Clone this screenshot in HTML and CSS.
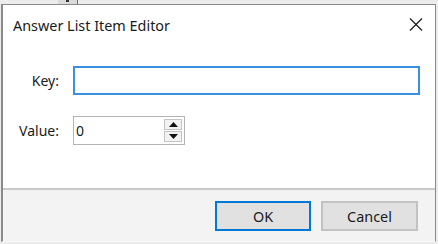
FILE: index.html
```html
<!DOCTYPE html>
<html>
<head>
<meta charset="utf-8">
<link rel="stylesheet" href="styles.css">
</head>
<body>
<div class="bg-strip"><span class="bg-btn"><span class="bg-mark"></span></span></div>
<div class="window">
  <div class="titlebar">
    <span class="title">Answer List Item Editor</span>
    <svg class="close" width="14" height="13" viewBox="0 0 14 13"><path d="M1 0.5 L13 12.5 M13 0.5 L1 12.5" stroke="#1a1a1a" stroke-width="1.2" fill="none"/></svg>
  </div>
  <div class="form">
    <label class="lbl">Key:</label>
    <div class="input key"></div>
    <label class="lbl">Value:</label>
    <div class="input spin">
      <span class="val">0</span>
      <div class="spinbtns">
        <div class="sb"><svg width="9" height="5" viewBox="0 0 9 5"><path d="M4.5 0 L9 5 L0 5 Z" fill="#111"/></svg></div>
        <div class="sb"><svg width="9" height="5" viewBox="0 0 9 5"><path d="M0 0 L9 0 L4.5 5 Z" fill="#111"/></svg></div>
      </div>
    </div>
  </div>
  <div class="footer">
    <button class="btn ok">OK</button>
    <button class="btn">Cancel</button>
  </div>
</div>
</body>
</html>
```
FILE: styles.css
```css
html, body {
  margin: 0;
  padding: 0;
}
body {
  width: 438px;
  height: 244px;
  box-sizing: border-box;
  padding-left: 1px;
  background: #ececec;
  font-family: "Noto Sans", "Open Sans", sans-serif;
  font-size: 14px;
  color: #1a1a1a;
  overflow: hidden;
}
.bg-strip {
  height: 4px;
  display: flex;
}
.bg-btn {
  margin-left: 57px;
  width: 19px;
  height: 4px;
  background: #dadada;
  border-right: 1px solid #6d6d6d;
  display: flex;
  justify-content: center;
}
.bg-mark {
  width: 3px;
  height: 2px;
  background: #333;
}
.window {
  width: 435px;
  height: 238px;
  box-sizing: border-box;
  background: #fff;
  border: 1px solid #8a8a8a;
  border-left: 2px solid #8a8a8a;
  border-bottom: 1px solid #f8f8f8;
  display: flex;
  flex-direction: column;
}
.titlebar {
  height: 40px;
  flex: none;
  display: flex;
  align-items: center;
  padding: 0 12px 0 10px;
  justify-content: space-between;
}
.title {
  font-size: 14.4px;
  line-height: 20px;
  margin-top: 1px;
}
.close {
  margin-top: -2px;
}
.form {
  flex: 1;
  display: grid;
  grid-template-columns: 56px 1fr;
  column-gap: 14px;
  row-gap: 21px;
  align-content: start;
  align-items: center;
  padding: 21px 15px 0 0;
}
.lbl {
  text-align: right;
  line-height: 20px;
}
.input {
  height: 29px;
  box-sizing: border-box;
  background: #fff;
}
.key {
  width: 347px;
  border: 2px solid #3a90e0;
}
.spin {
  width: 112px;
  border: 1px solid #b4b4b4;
  display: flex;
  align-items: center;
  justify-content: space-between;
  padding: 0 2px 0 2px;
}
.val {
  line-height: 20px;
}
.spinbtns {
  display: flex;
  flex-direction: column;
  gap: 1px;
}
.sb {
  width: 18px;
  height: 11px;
  box-sizing: border-box;
  border: 1px solid #c4c4c4;
  background: #f2f2f2;
  display: flex;
  align-items: center;
  justify-content: center;
}
.footer {
  height: 53px;
  flex: none;
  box-sizing: border-box;
  border-top: 2px solid #c9c9c9;
  background: #f3f3f3;
  display: flex;
  justify-content: flex-end;
  align-items: flex-start;
  gap: 10px;
  padding: 11px 17px 0 0;
}
.btn {
  width: 97px;
  height: 30px;
  box-sizing: border-box;
  background: #e1e1e1;
  border: 2px solid #c2c2c2;
  font-family: "Noto Sans", "Open Sans", sans-serif;
  font-size: 14.4px;
  color: #1a1a1a;
  padding: 0;
}
.ok {
  width: 96px;
  border-color: #0078d7;
}
```
